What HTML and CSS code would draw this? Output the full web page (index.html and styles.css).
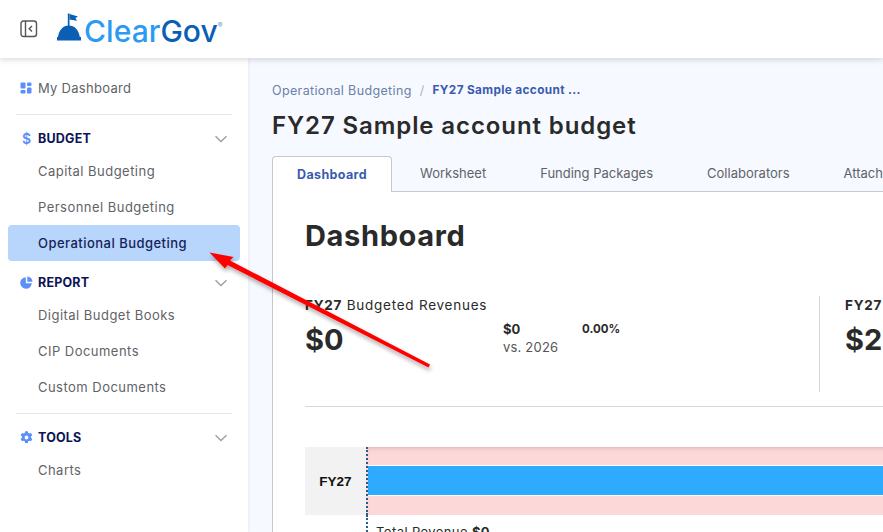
FILE: index.html
```html
<!DOCTYPE html>
<html lang="en">
<head>
<meta charset="utf-8">
<title>FY27 Sample account budget</title>
<link rel="stylesheet" href="styles.css">
</head>
<body>
<header class="topbar">
  <svg class="toggle" width="18" height="18" viewBox="0 0 18 18"><rect x="1" y="1" width="15.5" height="15.5" rx="2.5" fill="none" stroke="#555" stroke-width="1.4"/><path d="M5.5 1v15.5" stroke="#555" stroke-width="1.4"/><path d="M12 6l-2.8 2.8 2.8 2.8" fill="none" stroke="#555" stroke-width="1.4"/></svg>
  <div class="logo">
    <svg class="logo-mark" width="24" height="28" viewBox="0 0 24 28"><path d="M0 27.5v-3.500h1C2 17 6 12.500 11.800 12.500S21.800 17 22.800 24h1.200v3.500z" fill="#0a5fb4"/><path d="M10.800 14V0.500h1.700V14z" fill="#0a5fb4"/><path d="M12.500 1l8.500 2.500-2.500 1.500 1.500 2.800-7.500-1.300z" fill="#0a5fb4"/></svg>
    <span class="logo-clear">Clear</span><span class="logo-gov">Gov</span><span class="logo-reg">®</span>
  </div>
</header>
<div class="body-row">
  <nav class="sidebar">
    <a class="nav-top">
      <svg class="nav-icon" width="12" height="12" viewBox="0 0 12 12"><g fill="#5b8ff9"><rect x="0.500" y="0.500" width="5" height="6" rx="1"/><rect x="7" y="0.500" width="4.500" height="3.500" rx="1"/><rect x="0.500" y="8" width="5" height="3.500" rx="1"/><rect x="7" y="5.500" width="4.500" height="6" rx="1"/></g></svg>
      My Dashboard
    </a>
    <hr class="nav-rule">
    <section class="nav-section">
      <div class="nav-head">
        <span class="nav-glyph">$</span><span class="nav-title">BUDGET</span>
        <svg class="chev" width="14" height="8" viewBox="0 0 14 8"><path d="M1.500 1.200L7 6.500l5.500-5.300" fill="none" stroke="#9aa0a6" stroke-width="1.400"/></svg>
      </div>
      <a class="nav-item">Capital Budgeting</a>
      <a class="nav-item">Personnel Budgeting</a>
      <a class="nav-item active">Operational Budgeting</a>
    </section>
    <section class="nav-section">
      <div class="nav-head">
        <svg class="nav-icon" width="13" height="13" viewBox="0 0 13 13"><path d="M5.800 1.200v6h6A5.800 5.800 0 1 1 5.800 1.200z" fill="#5b8ff9"/><path d="M7.300 0.500a5.400 5.400 0 0 1 5.200 5.200H7.300z" fill="#5b8ff9"/></svg>
        <span class="nav-title">REPORT</span>
        <svg class="chev" width="14" height="8" viewBox="0 0 14 8"><path d="M1.500 1.200L7 6.500l5.500-5.300" fill="none" stroke="#9aa0a6" stroke-width="1.400"/></svg>
      </div>
      <a class="nav-item">Digital Budget Books</a>
      <a class="nav-item">CIP Documents</a>
      <a class="nav-item">Custom Documents</a>
    </section>
    <hr class="nav-rule">
    <section class="nav-section">
      <div class="nav-head">
        <svg class="nav-icon" width="13" height="13" viewBox="0 0 13 13"><path fill-rule="evenodd" d="M5.200 0.300h2.600l.4 1.700 1.100.6 1.700-.5 1.300 2.200-1.300 1.200v1.300l1.300 1.200-1.300 2.200-1.700-.5-1.100.6-.4 1.700H5.200l-.4-1.700-1.100-.6-1.700.5L.7 8.000 2 6.800V5.500L.7 4.300 2 2.100l1.700.5 1.100-.6zM6.500 4.600a1.900 1.900 0 1 0 0 3.800 1.900 1.900 0 0 0 0-3.800z" fill="#5b8ff9"/></svg>
        <span class="nav-title">TOOLS</span>
        <svg class="chev" width="14" height="8" viewBox="0 0 14 8"><path d="M1.500 1.200L7 6.500l5.500-5.300" fill="none" stroke="#9aa0a6" stroke-width="1.400"/></svg>
      </div>
      <a class="nav-item">Charts</a>
    </section>
  </nav>
  <main class="main">
    <div class="crumbs"><span class="crumb-link">Operational Budgeting</span><span class="crumb-sep">/</span><span class="crumb-here">FY27 Sample account ...</span></div>
    <h1 class="page-title">FY27 Sample account budget</h1>
    <div class="tabs">
      <span class="tab current">Dashboard</span>
      <span class="tab">Worksheet</span>
      <span class="tab">Funding Packages</span>
      <span class="tab">Collaborators</span>
      <span class="tab">Attachments</span>
    </div>
    <div class="panel">
      <h2 class="panel-title">Dashboard</h2>
      <div class="stats">
        <div class="stat-main">
          <div class="stat-label"><b>FY27</b> Budgeted Revenues</div>
          <div class="stat-value">$0</div>
        </div>
        <div class="stat-compare">
          <div class="cmp-top"><b class="cmp-amt">$0</b><b class="cmp-pct">0.00%</b></div>
          <div class="cmp-sub">vs. 2026</div>
        </div>
        <div class="stat-second">
          <div class="stat-label"><b>FY27</b> Budgeted Expenses</div>
          <div class="stat-value">$27,000</div>
        </div>
      </div>
      <hr class="panel-rule">
      <div class="chart">
        <div class="chart-label">FY27</div>
        <div class="chart-plot"><div class="chart-bar"></div></div>
      </div>
      <div class="chart-note">Total Revenue <b>$0</b></div>
    </div>
  </main>
</div>
<svg class="arrow" width="240" height="130" viewBox="0 0 240 130">
  <defs><filter id="sh" x="-10%" y="-10%" width="120%" height="130%"><feDropShadow dx="1" dy="3" stdDeviation="2" flood-color="#000" flood-opacity=".35"/></filter></defs>
  <path filter="url(#sh)" d="M1.500 1.500L25.500 6 22 9.500 222 113.500 220.500 116.500 19.500 14 17 17.500z" fill="#f00"/>
</svg>
</body>
</html>
```
FILE: styles.css
```css
* { box-sizing: border-box; }
html, body { margin: 0; padding: 0; height: 532px; overflow: hidden; }
body {
  position: relative;
  font-family: Inter, "Open Sans", sans-serif;
  font-size: 13px;
  color: #5f6368;
  background: #f6f9ff;
}
.topbar {
  position: relative;
  z-index: 2;
  height: 58px;
  display: flex;
  align-items: center;
  gap: 19px;
  padding-left: 20px;
  background: #fff;
  box-shadow: 0 2px 6px rgba(0,0,0,.14);
}
.toggle { flex: none; margin-top: -1px; }
.logo { display: flex; align-items: baseline; margin-top: 4px; }
.logo-mark { align-self: center; margin-top: -8px; margin-right: 3px; }
.logo-clear, .logo-gov { font-size: 30px; font-weight: 500; letter-spacing: .05px; }
.logo-clear { color: #2a9bf5; }
.logo-gov { color: #0a5fb4; }
.logo-reg { font-size: 7px; color: #6a9ccc; align-self: flex-start; margin-top: 8px; }
.body-row { display: flex; height: 474px; }
.sidebar {
  width: 248px;
  flex: none;
  padding: 12px 8px 0;
  background: #fff;
  box-shadow: 1px 0 3px rgba(0,0,0,.06);
}
.nav-top, .nav-item {
  display: flex;
  align-items: center;
  height: 36px;
  letter-spacing: .47px;
}
.nav-top { padding-left: 12px; gap: 6px; letter-spacing: .28px; }
.nav-item { padding-left: 30px; }
.nav-item.active {
  background: #b8d6fb;
  border-radius: 4px;
  color: #14235a;
  font-weight: 500;
}
.nav-rule { height: 1px; border: 0; margin: 8px 8px; background: #e6e8eb; }
.nav-section + .nav-section { margin-top: 6px; }
.nav-head {
  position: relative;
  display: flex;
  align-items: center;
  height: 30px;
  padding-left: 12px;
  gap: 5px;
}
.nav-icon { flex: none; }
.nav-glyph { width: 13px; text-align: center; color: #5b8ff9; font-weight: 600; font-size: 14px; }
.nav-title { color: #0b1456; font-size: 12.500px; font-weight: 700; letter-spacing: .2px; }
.chev { position: absolute; right: 12px; top: 12px; }
.main { flex: 1; min-width: 0; padding: 23px 0 0 24px; overflow: hidden; }
.crumbs { display: flex; align-items: center; height: 18px; font-size: 12.500px; letter-spacing: .36px; white-space: nowrap; }
.crumb-link { color: #6a81a8; }
.crumb-sep { margin: 0 8px; color: #a9b2bf; }
.crumb-here { color: #3a5bb0; font-weight: 700; font-size: 11.800px; }
.page-title {
  margin: 9px 0 0;
  font-size: 24px;
  line-height: 36px;
  font-weight: 600;
  color: #2a2a2a;
  letter-spacing: .9px;
  white-space: nowrap;
}
.tabs {
  display: flex;
  height: 36px;
  margin-top: 12px;
  white-space: nowrap;
  border-bottom: 1px solid #c8c8c8;
  width: 700px;
}
.tab { padding: 0 27px; line-height: 35px; letter-spacing: 0; flex: none; }
.tab.current {
  height: 36px;
  padding: 0 24px;
  margin-right: 1px;
  background: #fff;
  border: 1px solid #c8c8c8;
  border-bottom: 0;
  border-radius: 4px 4px 0 0;
  color: #3a5bb0;
  font-weight: 700;
  font-size: 12.500px;
  letter-spacing: .37px;
}
.panel {
  height: 400px;
  padding: 0 0 0 32px;
  width: 700px;
  background: #fff;
  border-left: 1px solid #c8c8c8;
}
.panel-title {
  margin: 0;
  padding-top: 26px;
  font-size: 29px;
  line-height: 36px;
  font-weight: 700;
  color: #2a2a2a;
  letter-spacing: .65px;
}
.stats { display: flex; height: 96px; margin-top: 42px; white-space: nowrap; color: #2a2a2a; }
.stat-main { width: 198px; flex: none; }
.stat-label { font-size: 13.500px; letter-spacing: .75px; line-height: 18px; }
.stat-value { margin-top: 8px; font-size: 29px; line-height: 36px; font-weight: 700; }
.stat-compare { width: 316px; flex: none; padding-top: 24px; font-size: 13px; line-height: 18px; }
.cmp-top { display: flex; }
.cmp-amt { width: 79px; font-weight: 700; font-size: 13px; }
.cmp-pct { font-weight: 700; font-size: 11.500px; }
.cmp-sub { color: #555; letter-spacing: .2px; }
.stat-second { flex: none; border-left: 1px solid #d6d6d6; padding-left: 25px; }
.panel-rule { height: 1px; border: 0; margin: 14px 0 0; background: #d8d8d8; }
.chart { display: flex; height: 68px; margin-top: 40px; }
.chart-label {
  width: 61px;
  background: #f2f2f2;
  color: #111;
  font-family: "Liberation Sans", sans-serif;
  font-weight: 700;
  font-size: 13.500px;
  display: flex;
  align-items: center;
  justify-content: center;
}
.chart-plot {
  flex: 1;
  display: flex;
  align-items: center;
  height: 68px;
  background: #fdd8d8;
  border-left: 2px dotted #2b5a8c;
  box-shadow: inset 0 4px 4px -3px rgba(120,60,60,.25);
}
.chart-bar {
  width: 100%;
  height: 31px;
  margin-top: -1px;
  background: #2eaaff;
  border: solid #fff;
  border-width: 1px 0;
}
.chart-note {
  margin-left: 61px;
  padding: 9px 0 0 8px;
  border-left: 2px dotted #2b5a8c;
  color: #2a2a2a;
  height: 40px;
  letter-spacing: .4px;
}
.arrow { position: absolute; z-index: 3; left: 208px; top: 251px; }
```
